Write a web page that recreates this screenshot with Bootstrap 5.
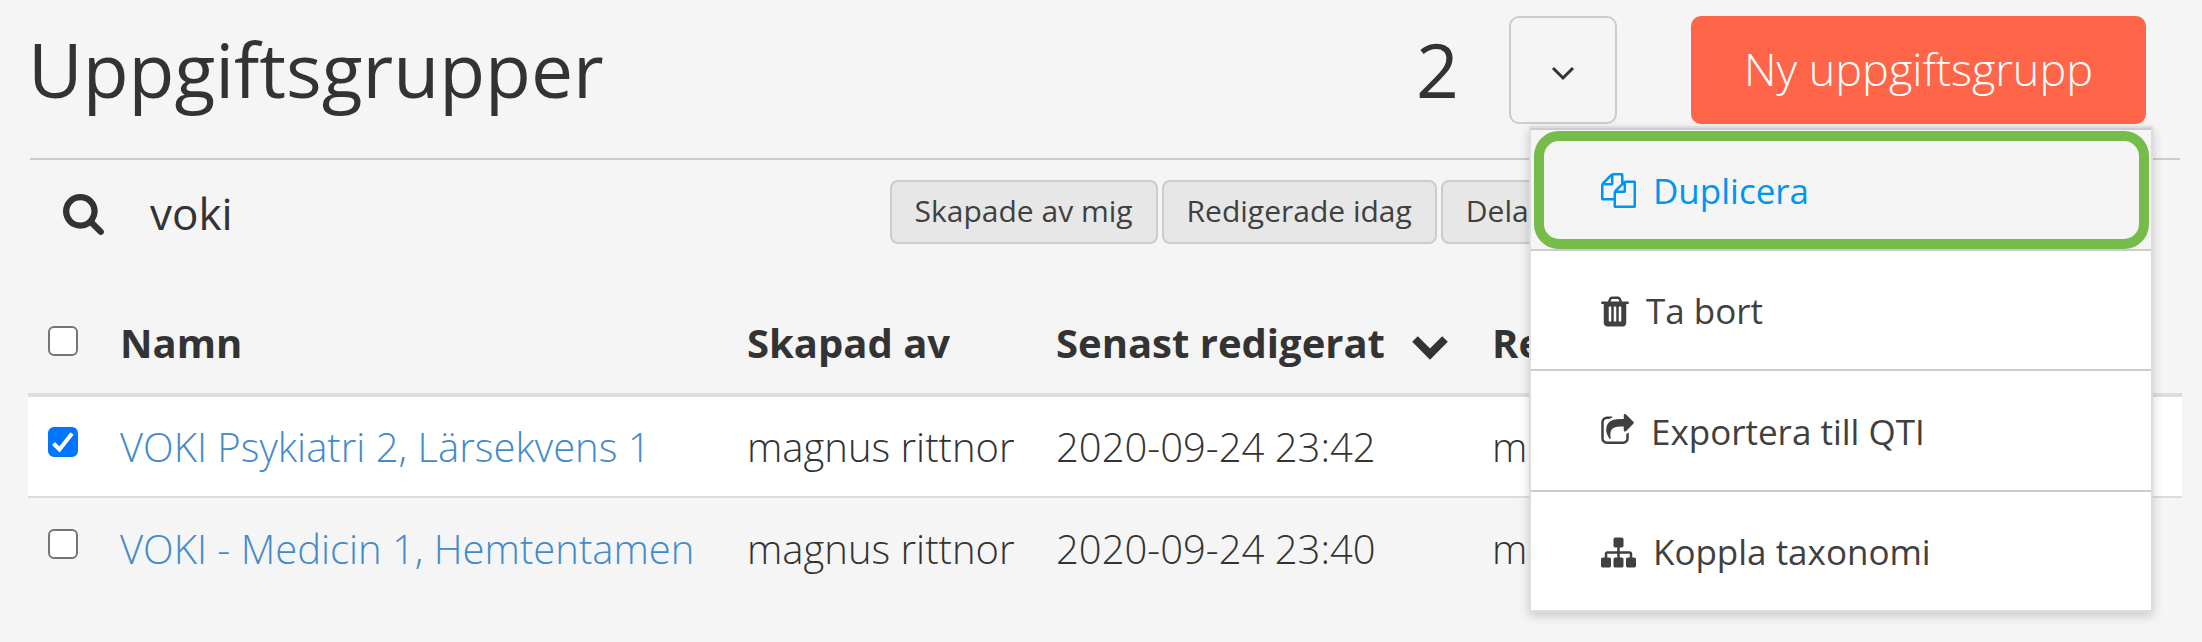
<!DOCTYPE html>
<html lang="sv">
<head>
<meta charset="utf-8">
<meta name="viewport" content="width=device-width, initial-scale=1">
<title>Uppgiftsgrupper</title>
<link rel="stylesheet" href="https://cdn.jsdelivr.net/npm/bootstrap@5.3.0/dist/css/bootstrap.min.css">
<style>
body { background: #f5f5f5; color: #333; font-family: "Open Sans", sans-serif; font-size: 40px; line-height: 1.4; }
.page { padding: 16px 20px 0 28px; min-height: 100vh; }
.page-head { padding-right: 36px; padding-bottom: 34px; }
.page-title, .group-count { font-size: 75px; font-weight: 400; line-height: 106px; padding-bottom: 2px; }
.group-count { margin-right: 50px; }
.menu-wrap { margin-right: 74px; }
.toggle-btn { width: 108px; height: 108px; border: 2px solid #ccc; border-radius: 10px; padding: 0; }
.new-btn, .new-btn:hover { background: #ff6549; color: #fff; font-size: 45px; font-weight: 300; line-height: 60px; border: 0; border-radius: 10px; padding: 23px 53px 25px; }
.divider { height: 2px; margin: 0 2px; border: 0; background: #ccc; opacity: 1; }
.tools { padding: 20px 0 49px; }
.search-area { width: 40%; padding-left: 35px; gap: 46px; }
.search-input, .search-input:focus { border: 0; background: none; box-shadow: none; color: #333; font-size: 44px; line-height: 60px; padding: 2px 0 0; height: 64px; }
.filter-btn, .filter-btn:hover { background: #e7e7e7; border: 2px solid #ccc; border-radius: 8px; color: #404040; font-size: 30px; line-height: 40px; padding: 9px 23px 11px; }
.group-table { --bs-table-bg: transparent; color: #333; table-layout: fixed; font-weight: 300; }
.group-table > :not(caption) > * > * { padding: 0 8px; height: 102px; line-height: 56px; vertical-align: middle; border: 0; border-bottom: 2px solid #ddd; white-space: nowrap; color: #333; }
.group-table > thead > tr > * { border-bottom: 4px solid #ddd; font-weight: 700; }
.group-table > tbody > tr:last-child > * { border-bottom: 0; }
.group-table > tbody > tr.chosen > * { background: #fff; }
.group-table > :not(caption) > * > .tick-cell { padding: 0 0 10px 20px; }
.group-table > thead > tr > .tick-cell { padding-bottom: 4px; }
.group-table a { color: #428bca; text-decoration: none; }
.tick-col { width: 84px; }
.name-col { width: 627px; }
.author-col { width: 309px; }
.date-col { width: 436px; }
.form-check-input { display: block; width: 30px; height: 30px; margin: 0; border: 2px solid #767676; border-radius: 6px; }
.form-check-input[type=checkbox] { border-radius: 6px; }
.form-check-input:checked { background-color: #0075ff; border-color: #0075ff; }
.form-check-input:checked[type=checkbox] { background-image: url("data:image/svg+xml,%3csvg xmlns='http://www.w3.org/2000/svg' viewBox='0 0 26 26'%3e%3cpath fill='none' stroke='%23fff' stroke-width='4' d='M3.5 14.5l6 6L22 4.5'/%3e%3c/svg%3e"); }
.sort-icon { margin-left: 27px; }
.action-menu { top: 110px; left: 20px; width: 624px; height: 486px; padding: 0; border: 2px solid #ddd; border-radius: 0; box-shadow: 0 4px 10px rgba(0,0,0,.18); background: #fff; z-index: 5; }
.action-menu > li { flex: 1 1 0; border-top: 2px solid #ccc; position: relative; }
.action-menu .dropdown-item { height: 100%; padding: 3px 70px 0; gap: 17px; font-size: 35px; line-height: 50px; color: #404040; }
.action-menu .dropdown-item.current { background: #f5f5f5; color: #0096f0; }
.marked-item::after { content: ""; position: absolute; inset: 1px 2px 0 3px; border: 10px solid #76bc4b; border-radius: 25px; pointer-events: none; z-index: 1; }
</style>
</head>
<body>
<main class="page">
  <header class="page-head d-flex align-items-center">
    <h1 class="page-title mb-0 me-auto">Uppgiftsgrupper</h1>
    <span class="group-count">2</span>
    <div class="menu-wrap position-relative">
      <button class="btn toggle-btn d-flex align-items-center justify-content-center" type="button" aria-label="Åtgärder" aria-expanded="true">
        <svg width="24" height="16" viewBox="0 0 24 16" class="mt-2"><path d="M2 2l10 10L22 2" fill="none" stroke="#333" stroke-width="3"/></svg>
      </button>
      <ul class="dropdown-menu action-menu show d-flex flex-column">
        <li class="marked-item"><button class="dropdown-item current d-flex align-items-center" type="button">
          <svg width="35" height="35" viewBox="0 0 1792 1792" fill="currentColor"><path d="M1696 384q40 0 68 28t28 68v1216q0 40-28 68t-68 28h-960q-40 0-68-28t-28-68v-288h-544q-40 0-68-28t-28-68v-672q0-40 20-88t48-76l408-408q28-28 76-48t88-20h416q40 0 68 28t28 68v328q68-40 128-40h416zm-544 213l-299 299h299v-299zm-640-384l-299 299h299v-299zm196 647l316-316v-416h-384v416q0 40-28 68t-68 28h-416v640h512v-256q0-40 20-88t48-76zm956 804v-1152h-384v416q0 40-28 68t-68 28h-416v640h896z"/></svg>
          <span>Duplicera</span></button></li>
        <li><button class="dropdown-item d-flex align-items-center" type="button">
          <svg width="28" height="35" viewBox="192 0 1408 1792" fill="currentColor"><path d="M704 1376v-704q0-14-9-23t-23-9h-64q-14 0-23 9t-9 23v704q0 14 9 23t23 9h64q14 0 23-9t9-23zm256 0v-704q0-14-9-23t-23-9h-64q-14 0-23 9t-9 23v704q0 14 9 23t23 9h64q14 0 23-9t9-23zm256 0v-704q0-14-9-23t-23-9h-64q-14 0-23 9t-9 23v704q0 14 9 23t23 9h64q14 0 23-9t9-23zm-544-992h448l-48-117q-7-9-17-11h-317q-10 2-17 11zm928 32v64q0 14-9 23t-23 9h-96v948q0 83-47 143.5t-113 60.5h-832q-66 0-113-58.5t-47-141.5v-952h-96q-14 0-23-9t-9-23v-64q0-14 9-23t23-9h309l70-167q15-37 54-63t79-26h320q40 0 79 26t54 63l70 167h309q14 0 23 9t9 23z"/></svg>
          <span>Ta bort</span></button></li>
        <li><button class="dropdown-item d-flex align-items-center" type="button">
          <svg width="33" height="35" viewBox="64 0 1664 1792" fill="currentColor"><path d="M1472 989v259q0 119-84.5 203.5t-203.5 84.5h-832q-119 0-203.5-84.5t-84.5-203.5v-832q0-119 84.5-203.5t203.5-84.5h255q13 0 22.5 9.5t9.5 22.5q0 27-26 32-77 26-133 60-10 4-16 4h-112q-66 0-113 47t-47 113v832q0 66 47 113t113 47h832q66 0 113-47t47-113v-214q0-19 18-29 28-13 54-37 16-16 35-8 21 9 21 29zm237-496l-384 384q-18 19-45 19-12 0-25-5-39-17-39-59v-192h-160q-323 0-438 131-119 137-74 473 3 23-20 34-8 2-12 2-16 0-26-13-10-14-21-31t-39.5-68.5-49.5-99.5-38.5-114-17.5-122q0-49 3.5-91t14-90 28-88 47-81.5 68.5-74 94.5-61.5 124.5-48.5 159.5-30.5 196.5-11h160v-192q0-42 39-59 13-5 25-5 26 0 45 19l384 384q19 19 19 45t-19 45z"/></svg>
          <span>Exportera till QTI</span></button></li>
        <li><button class="dropdown-item d-flex align-items-center" type="button">
          <svg width="35" height="35" viewBox="0 0 1792 1792" fill="currentColor"><path d="M1792 1248v320q0 40-28 68t-68 28h-320q-40 0-68-28t-28-68v-320q0-40 28-68t68-28h96v-192h-512v192h96q40 0 68 28t28 68v320q0 40-28 68t-68 28h-320q-40 0-68-28t-28-68v-320q0-40 28-68t68-28h96v-192h-512v192h96q40 0 68 28t28 68v320q0 40-28 68t-68 28h-320q-40 0-68-28t-28-68v-320q0-40 28-68t68-28h96v-192q0-52 38-90t90-38h512v-192h-96q-40 0-68-28t-28-68v-320q0-40 28-68t68-28h320q40 0 68 28t28 68v320q0 40-28 68t-68 28h-96v192h512q52 0 90 38t38 90v192h96q40 0 68 28t28 68z"/></svg>
          <span>Koppla taxonomi</span></button></li>
      </ul>
    </div>
    <button class="btn new-btn" type="button">Ny uppgiftsgrupp</button>
  </header>
  <hr class="divider">
  <div class="tools d-flex align-items-center">
    <div class="search-area d-flex align-items-center">
      <label for="search" class="d-flex flex-shrink-0 mt-1" aria-label="Sök"><svg width="41" height="41" viewBox="64 128 1664 1664" fill="#333"><path d="M1216 832q0-185-131.5-316.5t-316.5-131.5-316.5 131.5-131.5 316.5 131.5 316.5 316.5 131.5 316.5-131.5 131.5-316.5zm512 832q0 52-38 90t-90 38q-54 0-90-38l-343-342q-179 124-399 124-143 0-273.5-55.5t-225-150-150-225-55.5-273.5 55.5-273.5 150-225 225-150 273.5-55.5 273.5 55.5 225 150 150 225 55.5 273.5q0 220-124 399l343 343q37 37 37 90z"/></svg></label>
      <input id="search" class="form-control search-input" type="text" value="voki">
    </div>
    <div class="d-flex gap-1">
      <button class="btn filter-btn" type="button">Skapade av mig</button>
      <button class="btn filter-btn" type="button">Redigerade idag</button>
      <button class="btn filter-btn" type="button">Delade</button>
    </div>
  </div>
  <table class="table group-table mb-0">
    <colgroup><col class="tick-col"><col class="name-col"><col class="author-col"><col class="date-col"><col></colgroup>
    <thead>
      <tr>
        <th class="tick-cell"><input class="form-check-input" type="checkbox" aria-label="Markera alla"></th>
        <th>Namn</th>
        <th>Skapad av</th>
        <th>Senast redigerat<svg class="sort-icon" width="36" height="25" viewBox="0 0 36 25"><path d="M3 4l15 15L33 4" fill="none" stroke="#333" stroke-width="8"/></svg></th>
        <th>Red. av</th>
      </tr>
    </thead>
    <tbody>
      <tr class="chosen">
        <td class="tick-cell"><input class="form-check-input" type="checkbox" checked aria-label="Markera VOKI Psykiatri 2, Lärsekvens 1"></td>
        <td><a href="#">VOKI Psykiatri 2, Lärsekvens 1</a></td>
        <td>magnus rittnor</td>
        <td>2020-09-24 23:42</td>
        <td>magnus</td>
      </tr>
      <tr>
        <td class="tick-cell"><input class="form-check-input" type="checkbox" aria-label="Markera VOKI - Medicin 1, Hemtentamen"></td>
        <td><a href="#">VOKI - Medicin 1, Hemtentamen</a></td>
        <td>magnus rittnor</td>
        <td>2020-09-24 23:40</td>
        <td>magnus</td>
      </tr>
    </tbody>
  </table>
</main>
<script src="https://cdn.jsdelivr.net/npm/bootstrap@5.3.0/dist/js/bootstrap.bundle.min.js"></script>
</body>
</html>
